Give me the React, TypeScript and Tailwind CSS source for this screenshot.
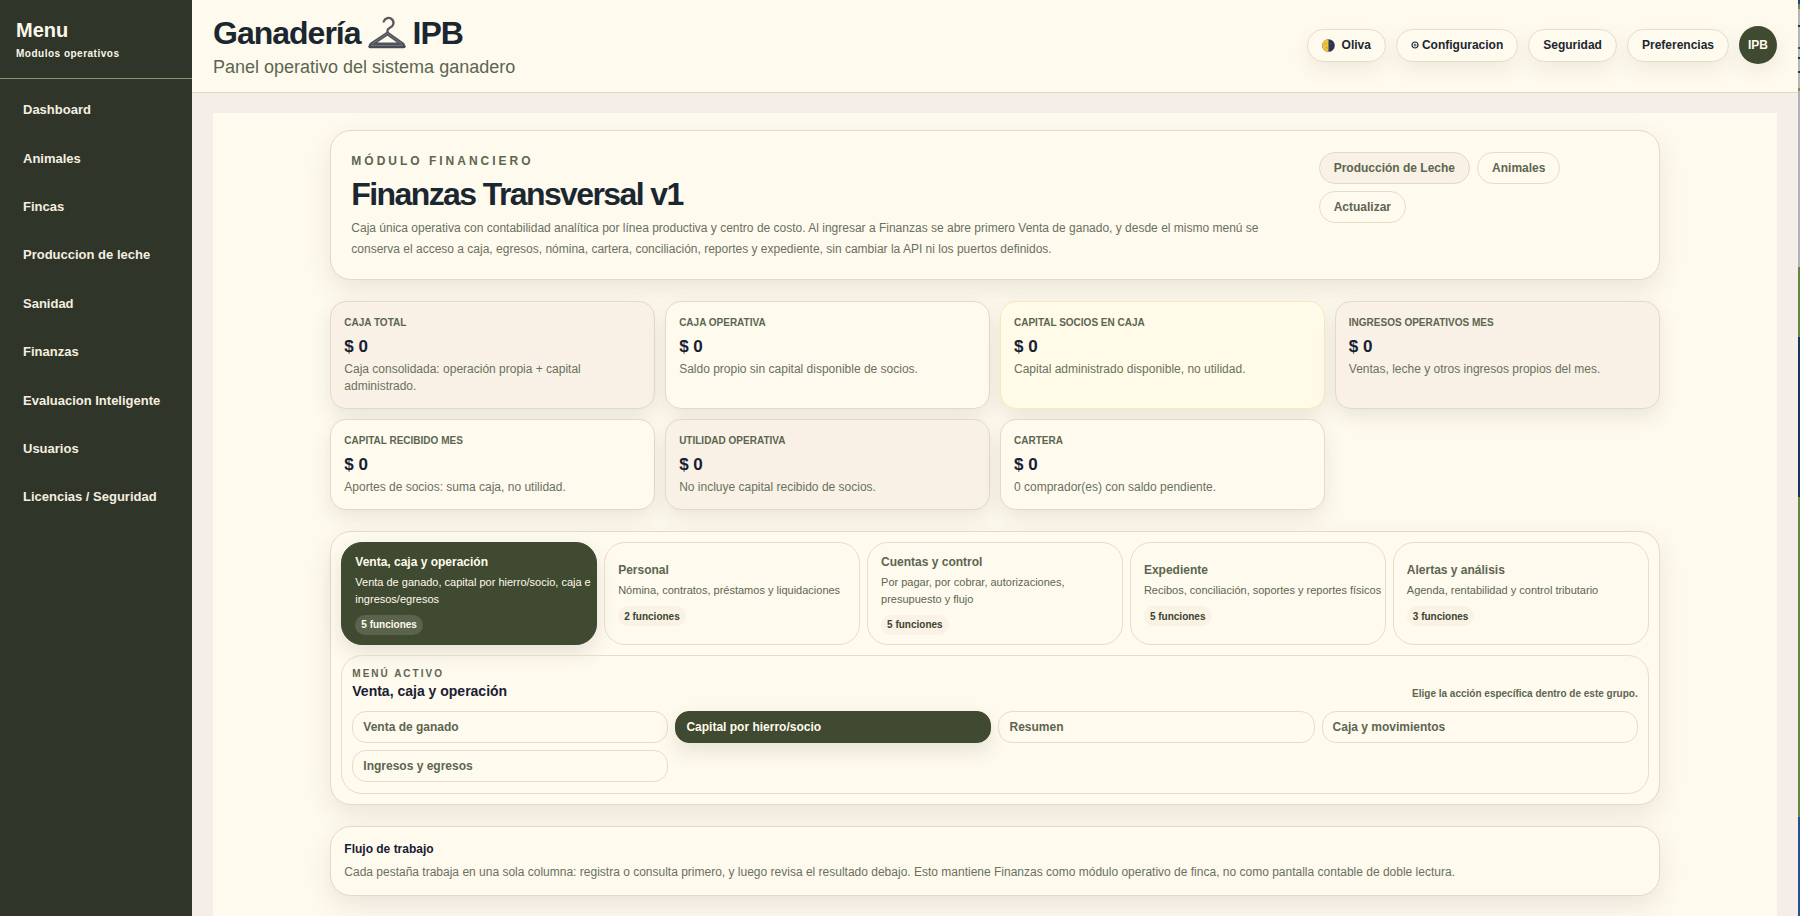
import React from 'react';

const navItems = [
  'Dashboard',
  'Animales',
  'Fincas',
  'Produccion de leche',
  'Sanidad',
  'Finanzas',
  'Evaluacion Inteligente',
  'Usuarios',
  'Licencias / Seguridad',
];

type Tone = 'sand' | 'plain' | 'yellow';

const stats: { label: string; value: string; note: string; tone: Tone }[] = [
  { label: 'Caja total', value: '$ 0', note: 'Caja consolidada: operación propia + capital administrado.', tone: 'sand' },
  { label: 'Caja operativa', value: '$ 0', note: 'Saldo propio sin capital disponible de socios.', tone: 'plain' },
  { label: 'Capital socios en caja', value: '$ 0', note: 'Capital administrado disponible, no utilidad.', tone: 'yellow' },
  { label: 'Ingresos operativos mes', value: '$ 0', note: 'Ventas, leche y otros ingresos propios del mes.', tone: 'sand' },
  { label: 'Capital recibido mes', value: '$ 0', note: 'Aportes de socios: suma caja, no utilidad.', tone: 'plain' },
  { label: 'Utilidad operativa', value: '$ 0', note: 'No incluye capital recibido de socios.', tone: 'sand' },
  { label: 'Cartera', value: '$ 0', note: '0 comprador(es) con saldo pendiente.', tone: 'plain' },
];

const toneClass: Record<Tone, string> = {
  sand: 'bg-[#f9f1e5] border-[#e3dac6]',
  plain: 'bg-[#fffaee] border-[#e3dac6]',
  yellow: 'bg-[#fffbe8] border-[#f8e9b8]',
};

const groups = [
  { title: 'Venta, caja y operación', text: 'Venta de ganado, capital por hierro/socio, caja e ingresos/egresos', count: '5 funciones', active: true },
  { title: 'Personal', text: 'Nómina, contratos, préstamos y liquidaciones', count: '2 funciones' },
  { title: 'Cuentas y control', text: 'Por pagar, por cobrar, autorizaciones, presupuesto y flujo', count: '5 funciones' },
  { title: 'Expediente', text: 'Recibos, conciliación, soportes y reportes físicos', count: '5 funciones' },
  { title: 'Alertas y análisis', text: 'Agenda, rentabilidad y control tributario', count: '3 funciones' },
];

const actions = [
  { label: 'Venta de ganado' },
  { label: 'Capital por hierro/socio', active: true },
  { label: 'Resumen' },
  { label: 'Caja y movimientos' },
  { label: 'Ingresos y egresos' },
];

function Hanger() {
  return (
    <svg viewBox="0 0 38 34" className="h-[34px] w-[38px]" fill="none" aria-hidden="true">
      <path d="M19.500 17v-2.500c0-1.500 1-2 2.500-2.800a5 5 0 1 0-6.300-6.200" stroke="#55585f" strokeWidth="2.300" strokeLinecap="round" />
      <path d="M19.500 17.500 3 28.500h32Z" stroke="#50535a" strokeWidth="3.800" strokeLinejoin="round" />
      <path d="M2 30.500h34" stroke="#484b52" strokeWidth="3.400" strokeLinecap="round" />
      <path d="M3 29.500h32M19.500 17.500 4 28M19.500 17.500 34 28" stroke="#7d8088" strokeWidth=".8" />
    </svg>
  );
}

function HalfMoon() {
  return (
    <svg viewBox="0 0 14 14" className="size-[13px]" aria-hidden="true">
      <circle cx="7" cy="7" r="6.800" fill="#2b3550" />
      <path d="M7 .2a6.800 6.800 0 0 0 0 13.600Z" fill="#f3c33c" />
      <circle cx="4" cy="5" r="1" fill="#dca62c" />
      <circle cx="5" cy="9.500" r="1.200" fill="#dca62c" />
      <circle cx="9.500" cy="5" r="1" fill="#3d4763" />
    </svg>
  );
}

const pill =
  'flex h-[33px] items-center rounded-full border border-[#e6ddc8] bg-[#fffaee] px-[14px] text-[12px] font-bold text-[#1b2730] shadow-[0_8px_20px_rgba(47,52,40,0.08)]';

const chip = 'flex h-8 items-center rounded-full border px-[14px] text-[12px] font-bold text-[#5b6650]';

export default function App() {
  return (
    <div className="flex h-screen overflow-hidden bg-[#f5eee8] font-['Liberation_Sans',Arial,sans-serif] text-[#1b2730]">
      <aside className="w-48 shrink-0 bg-[#2f3528] text-[#fbf7e9]">
        <div className="h-[79px] border-b border-[#8d9377] px-4 pt-[18px]">
          <h2 className="text-xl leading-6 font-bold">Menu</h2>
          <p className="mt-1 text-[10px] leading-4 font-bold tracking-wider">Modulos operativos</p>
        </div>
        <nav className="flex h-[438px] flex-col justify-between px-2 pt-[11px]">
          {navItems.map((item) => (
            <a key={item} href="#" className="flex h-10 items-center px-[15px] text-[13px] font-bold whitespace-nowrap text-[#f5efe0]">
              {item}
            </a>
          ))}
        </nav>
      </aside>

      <div className="flex min-w-0 flex-1 flex-col">
        <header className="flex h-[93px] shrink-0 items-center justify-between border-b border-[#ded8be] bg-[#fffaee] px-[21px] pb-[2px]">
          <div>
            <h1 className="flex items-center gap-[7px] pt-[3px] text-[32px] leading-9 font-bold tracking-[-1px]">
              Ganadería <Hanger /> IPB
            </h1>
            <p className="mt-1 text-lg leading-6 text-[#5b6650]">Panel operativo del sistema ganadero</p>
          </div>
          <div className="flex items-center gap-[10px]">
            <button className={pill}>
              <HalfMoon />
              <span className="ml-[7px]">Oliva</span>
            </button>
            <button className={pill}>
              <svg viewBox="0 0 8 8" className="mr-[3px] size-2" fill="none" stroke="#1b2730" aria-hidden="true">
                <circle cx="4" cy="4" r="3" strokeWidth="1.200" />
                <circle cx="4" cy="4" r="1" strokeWidth=".8" />
              </svg>
              Configuracion
            </button>
            <button className={pill}>Seguridad</button>
            <button className={pill}>Preferencias</button>
            <span className="flex size-[38px] items-center justify-center rounded-full bg-[#3f4a31] text-[12px] font-bold text-[#fffaee] shadow-[0_8px_20px_rgba(47,52,40,0.08)]">
              IPB
            </span>
          </div>
        </header>

        <main className="min-h-0 flex-1 px-[21px] pt-5">
          <div className="h-full overflow-hidden bg-[#fffaee] pt-[17px]">
            <div className="mx-auto flex w-[85%] flex-col gap-[21px]">
              <section className="flex h-[150px] items-start rounded-[21px] border border-[#e3dac6] bg-[#fffaee] px-5 pt-[21px] shadow-[0_10px_26px_rgba(47,52,40,0.1)]">
                <div className="min-w-0 flex-1">
                  <p className="text-xs leading-[18px] font-bold tracking-[3px] text-[#5b6650] uppercase">Módulo financiero</p>
                  <h2 className="mt-1 text-[32px] leading-10 font-bold tracking-tighter">Finanzas Transversal v1</h2>
                  <p className="mt-1 text-[12px] leading-[21px] text-[#69715f]">
                    Caja única operativa con contabilidad analítica por línea productiva y centro de costo. Al ingresar a Finanzas se abre primero Venta de ganado, y desde el mismo menú se conserva el acceso a caja, egresos, nómina, cartera, conciliación, reportes y expediente, sin cambiar la API ni los puertos definidos.
                  </p>
                </div>
                <div className="ml-10 flex w-[320px] flex-wrap gap-[7px]">
                  <button className={`${chip} border-[#e3dac6] bg-[#f9f1e5]`}>Producción de Leche</button>
                  <button className={`${chip} border-[#e6ddc8]`}>Animales</button>
                  <div className="basis-full">
                    <button className={`${chip} border-[#e6ddc8]`}>Actualizar</button>
                  </div>
                </div>
              </section>

              <section className="grid grid-cols-4 gap-[10px]">
                {stats.map((s) => (
                  <article key={s.label} className={`rounded-2xl border px-[13px] py-[13px] shadow-[0_8px_20px_rgba(47,52,40,0.1)] ${toneClass[s.tone]}`}>
                    <h3 className="text-[10px] leading-4 font-bold text-[#5b6650] uppercase">{s.label}</h3>
                    <p className="mt-[5px] text-[17px] leading-[22px] font-bold text-[#172033]">{s.value}</p>
                    <p className="mt-[3px] text-[12px] leading-[17px] text-[#69715f]">{s.note}</p>
                  </article>
                ))}
              </section>

              <section className="flex flex-col gap-[10px] rounded-[21px] border border-[#e3dac6] bg-[#fffaee] p-[10px] shadow-[0_10px_26px_rgba(47,52,40,0.1)]">
                <div className="grid grid-cols-5 gap-[7px]">
                  {groups.map((g) => (
                    <button
                      key={g.title}
                      className={`flex h-[103px] flex-col items-start justify-center rounded-[21px] border pr-[3px] pl-[13px] text-left ${
                        g.active
                          ? 'border-[#3f4a31] bg-[#3f4a31] text-[#fffaee] shadow-[0_8px_20px_rgba(47,52,40,0.12)]'
                          : 'border-[#e6ddc8] text-[#5b6650]'
                      }`}
                    >
                      <span className="text-[12px] leading-[18px] font-bold">{g.title}</span>
                      <span className="mt-[3px] text-[11px] leading-[17px]">{g.text}</span>
                      <span
                        className={`mt-[7px] flex h-5 items-center rounded-full px-[6px] text-[10px] font-bold ${
                          g.active ? 'bg-[#5a644d] text-[#fffaee]' : 'bg-[#f9f2e5] text-[#3b4431]'
                        }`}
                      >
                        {g.count}
                      </span>
                    </button>
                  ))}
                </div>
                <div className="rounded-[21px] border border-[#e6ddc8] px-[10px] pt-[10px] pb-[11px]">
                  <div className="flex items-end justify-between">
                    <div>
                      <p className="text-[10px] leading-4 font-bold tracking-[2px] text-[#5b6650] uppercase">Menú activo</p>
                      <h3 className="text-sm leading-[18px] font-bold text-[#172033]">Venta, caja y operación</h3>
                    </div>
                    <p className="text-[10px] leading-3 font-bold text-[#5b6650]">Elige la acción específica dentro de este grupo.</p>
                  </div>
                  <div className="mt-[11px] grid grid-cols-4 gap-[7px]">
                    {actions.map((a) => (
                      <button
                        key={a.label}
                        className={`flex h-8 items-center rounded-[14px] border px-[10px] text-[12px] font-bold ${
                          a.active
                            ? 'border-[#3f4a31] bg-[#3f4a31] text-[#fffaee] shadow-[0_8px_20px_rgba(47,52,40,0.12)]'
                            : 'border-[#e6ddc8] text-[#5b6650]'
                        }`}
                      >
                        {a.label}
                      </button>
                    ))}
                  </div>
                </div>
              </section>

              <section className="rounded-[21px] border border-[#e3dac6] bg-[#fffaee] px-[13px] pt-[13px] pb-3 shadow-[0_10px_26px_rgba(47,52,40,0.1)]">
                <h3 className="text-xs leading-[18px] font-bold text-[#172033]">Flujo de trabajo</h3>
                <p className="mt-1 text-[12px] leading-[21px] text-[#69715f]">
                  Cada pestaña trabaja en una sola columna: registra o consulta primero, y luego revisa el resultado debajo. Esto mantiene Finanzas como módulo operativo de finca, no como pantalla contable de doble lectura.
                </p>
              </section>
            </div>
          </div>
        </main>
      </div>

      <div className="flex w-[2px] shrink-0 flex-col" aria-hidden="true">
        <div className="h-1 bg-[#1d4585]" />
        <div className="h-[5px] bg-[#6d8d3c]" />
        <div className="h-4 bg-[#b4b6b4]" />
        <div className="h-[2px] bg-[#173f35]" />
        <div className="h-5 bg-[#b4b6b4]" />
        <div className="h-[2px] bg-[#1d6045]" />
        <div className="h-2 bg-[#b4b6b4]" />
        <div className="h-[2px] bg-[#173f35]" />
        <div className="h-3 bg-[#b4b6b4]" />
        <div className="h-[2px] bg-[#173f35]" />
        <div className="h-[15px] bg-[#b4b6b4]" />
        <div className="h-[3px] bg-[#7d953c]" />
        <div className="h-[176px] bg-[#b0b2b5]" />
        <div className="h-[70px] bg-[#5f8a3c]" />
        <div className="h-40 bg-[#14365f]" />
        <div className="h-[320px] bg-[#5f8a3c]" />
        <div className="flex-1 bg-[#24508f]" />
      </div>
    </div>
  );
}
